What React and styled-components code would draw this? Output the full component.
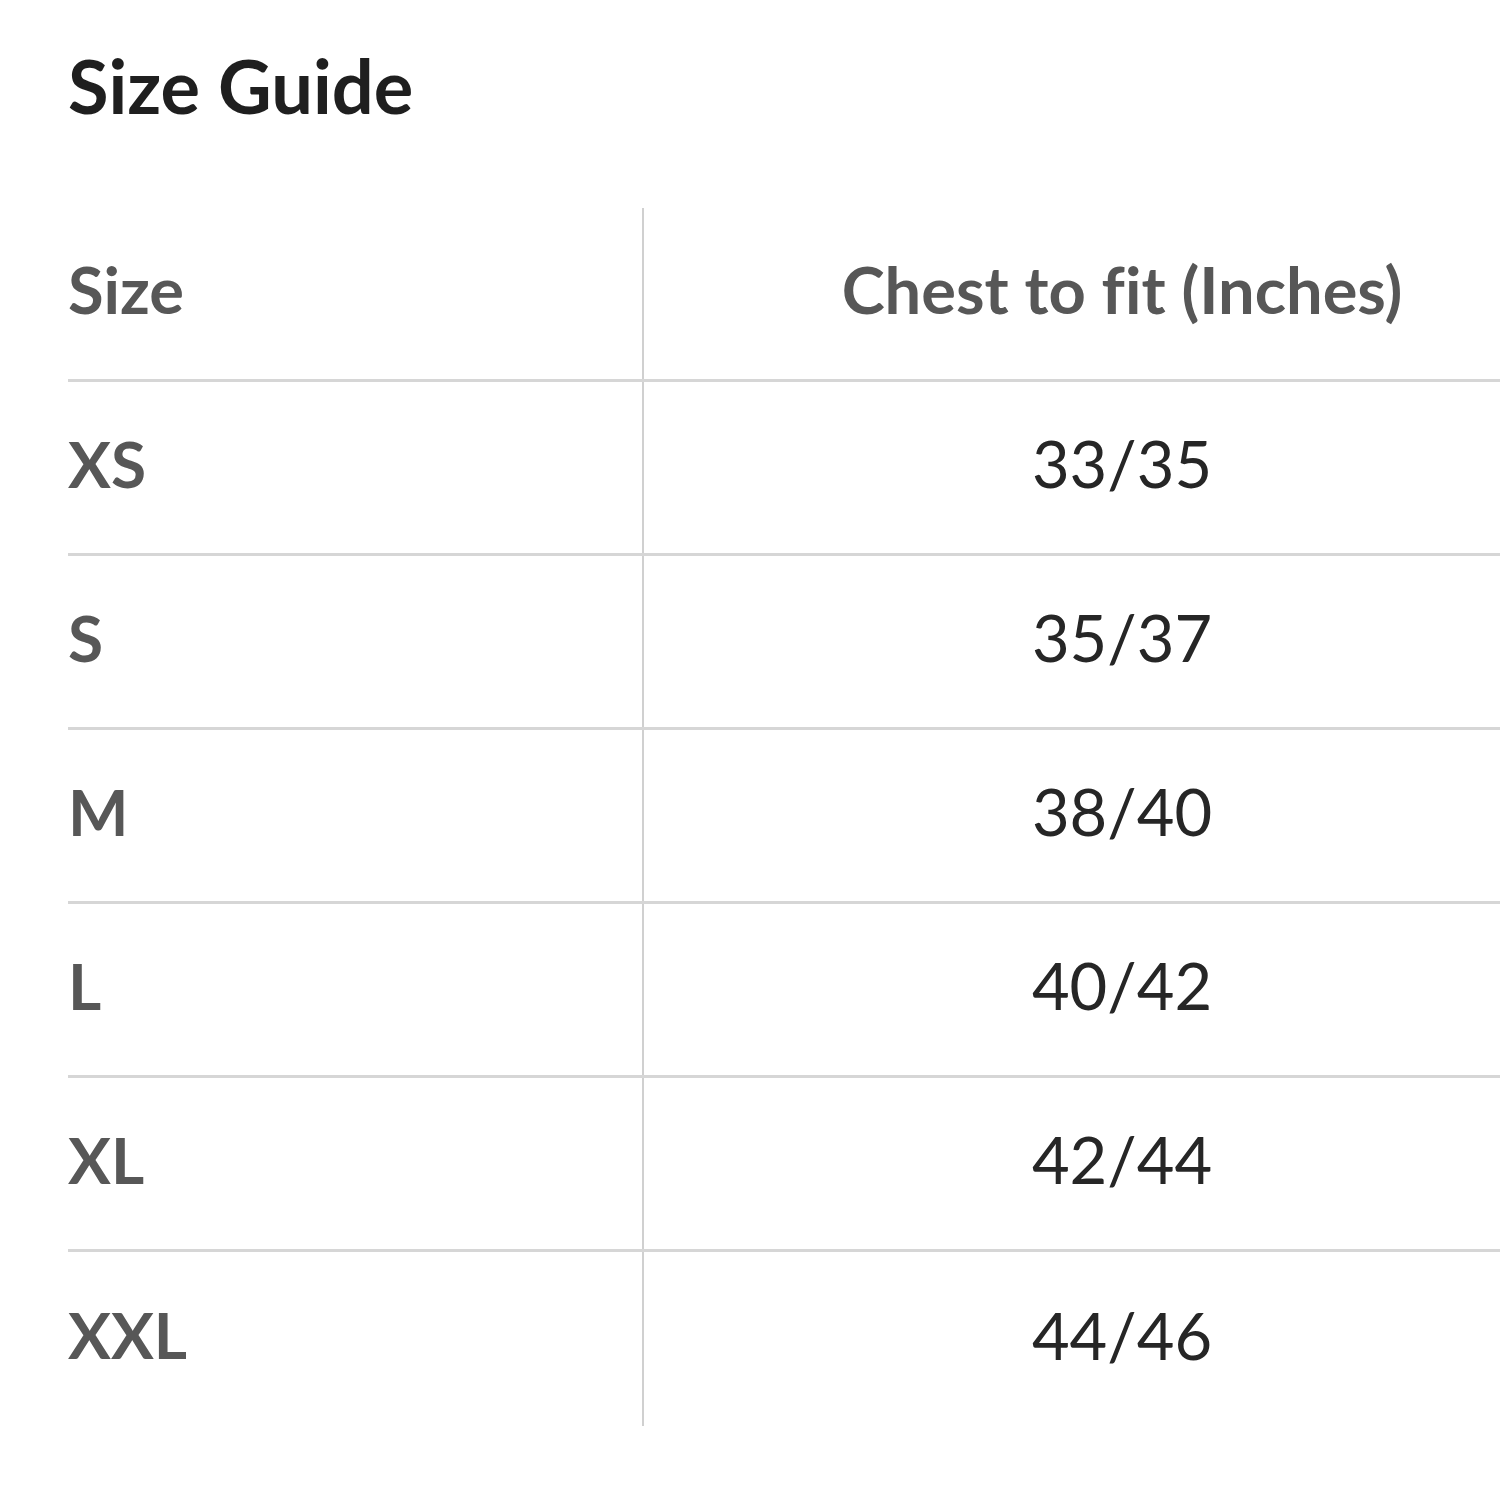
import React from "react";
import styled, { createGlobalStyle } from "styled-components";

const GlobalStyle = createGlobalStyle`
  html, body {
    margin: 0;
    padding: 0;
    background: #fff;
    overflow: hidden;
  }
  body {
    font-family: Lato, "Open Sans", sans-serif;
    font-variant-ligatures: none;
  }
`;

const Page = styled.div`
  width: 1500px;
  height: 1500px;
  padding: 42px 0 0 68px;
  box-sizing: border-box;
  overflow: hidden;
`;

const Title = styled.h1`
  margin: 0;
  font-size: 74px;
  line-height: 1.2;
  font-weight: 700;
  color: #1f1f1f;
`;

const Table = styled.div`
  margin-top: 77px;
  width: 1532px;
`;

const Row = styled.div`
  display: flex;
  height: 174px;
  box-sizing: border-box;
  border-bottom: ${p => (p.last ? "none" : "3px solid #d6d6d6")};
`;

const SizeCell = styled.div`
  width: 576px;
  flex-shrink: 0;
  display: flex;
  align-items: center;
  padding-bottom: 8px;
  box-sizing: border-box;
  border-right: 2px solid #d0d0d0;
  font-size: ${p => (p.head ? "65px" : "64px")};
  font-weight: 700;
  color: #575757;
`;

const ValueCell = styled.div`
  flex: 1;
  display: flex;
  align-items: center;
  justify-content: center;
  padding-bottom: 8px;
  box-sizing: border-box;
  font-size: 65px;
  font-weight: ${p => (p.head ? 700 : 400)};
  color: ${p => (p.head ? "#575757" : "#262626")};
`;

const sizes = [
  { size: "XS", chest: "33/35" },
  { size: "S", chest: "35/37" },
  { size: "M", chest: "38/40" },
  { size: "L", chest: "40/42" },
  { size: "XL", chest: "42/44" },
  { size: "XXL", chest: "44/46" }
];

export default function App() {
  return (
    <Page>
      <GlobalStyle />
      <Title>Size Guide</Title>
      <Table>
        <Row>
          <SizeCell head>Size</SizeCell>
          <ValueCell head>Chest to fit (Inches)</ValueCell>
        </Row>
        {sizes.map((s, i) => (
          <Row key={s.size} last={i === sizes.length - 1}>
            <SizeCell>{s.size}</SizeCell>
            <ValueCell>{s.chest}</ValueCell>
          </Row>
        ))}
      </Table>
    </Page>
  );
}
